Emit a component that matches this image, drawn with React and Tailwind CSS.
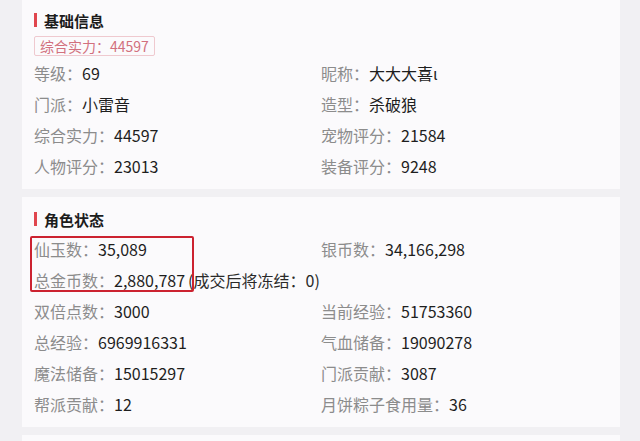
import React from "react";

const FONT = { fontFamily: '"Noto Sans CJK SC", "Noto Sans", sans-serif' };

function Heading({ children }) {
  return (
    <div className="flex h-[20px] items-center">
      <div className="mr-[7px] h-[14px] w-[3px] bg-[#e0464e]" />
      <div className="text-[15px] font-bold leading-none text-[#1c1c1c]">{children}</div>
    </div>
  );
}

function Cell({ label, value, extra }) {
  return (
    <div className="flex h-[31px] items-center whitespace-nowrap text-[16px] leading-none">
      <span className="text-[#8c8c8c]">{label}：</span>
      <span className="text-[#1e1e1e]">{value}</span>
      {extra && <span className="ml-[3px] text-[#2a2a2a]">{extra}</span>}
    </div>
  );
}

export default function App() {
  return (
    <div style={FONT} className="h-[441px] w-[640px] overflow-hidden bg-[#f1f0f3] pl-[22px] pr-[20px]">
      <div className="flex flex-col gap-[8px]">
        <div className="bg-[#fbfafc] pl-[12px] pt-[10px] pb-[8px]">
          <Heading>基础信息</Heading>
          <div className="mt-[6px] inline-flex h-[20px] items-center rounded-[2px] border border-[#efc9cf] px-[5px] text-[14px] leading-none text-[#d2707e]">
            综合实力：44597
          </div>
          <div className="grid grid-cols-[287px_1fr]">
            <Cell label="等级" value="69" />
            <Cell label="昵称" value="大大大喜ι" />
            <Cell label="门派" value="小雷音" />
            <Cell label="造型" value="杀破狼" />
            <Cell label="综合实力" value="44597" />
            <Cell label="宠物评分" value="21584" />
            <Cell label="人物评分" value="23013" />
            <Cell label="装备评分" value="9248" />
          </div>
        </div>
        <div className="bg-[#fbfafc] pl-[12px] pt-[12px] pb-[8px]">
          <Heading>角色状态</Heading>
          <div className="relative mt-[4px] grid grid-cols-[287px_1fr]">
            <div className="absolute left-[-4px] top-[3px] h-[56px] w-[164px] rounded-[2px] border-2 border-[#cc2230]" />
            <Cell label="仙玉数" value="35,089" />
            <Cell label="银币数" value="34,166,298" />
            <Cell label="总金币数" value="2,880,787" extra="(成交后将冻结：0)" />
            <div />
            <Cell label="双倍点数" value="3000" />
            <Cell label="当前经验" value="51753360" />
            <Cell label="总经验" value="6969916331" />
            <Cell label="气血储备" value="19090278" />
            <Cell label="魔法储备" value="15015297" />
            <Cell label="门派贡献" value="3087" />
            <Cell label="帮派贡献" value="12" />
            <Cell label="月饼粽子食用量" value="36" />
          </div>
        </div>
        <div className="h-[40px] bg-[#fbfafc]" />
      </div>
    </div>
  );
}
